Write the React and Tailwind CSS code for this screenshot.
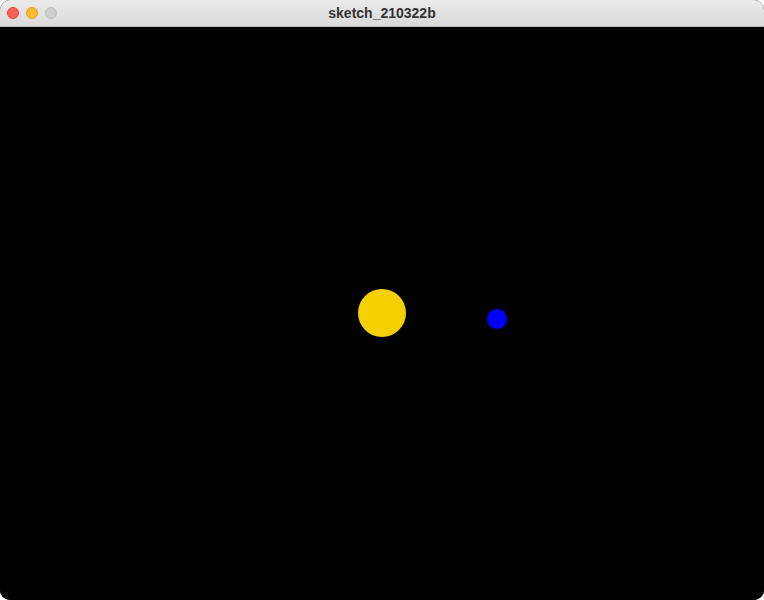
import React from 'react'

export default function App(){
  return (
    <div className="w-[764px] h-[600px] bg-white">
      <div className="w-full h-full flex flex-col rounded-[10px] overflow-hidden bg-black">
        <div className="relative h-[27px] shrink-0 flex items-center justify-center bg-gradient-to-b from-[#ebebeb] to-[#d9d9d9] border-b border-[#b9b9b9]">
          <div className="absolute left-[7px] top-[7px] flex gap-[7px]">
            <span className="w-[12px] h-[12px] rounded-full bg-[#fd5e56] border border-[#e0443e]" />
            <span className="w-[12px] h-[12px] rounded-full bg-[#febc2e] border border-[#dea123]" />
            <span className="w-[12px] h-[12px] rounded-full bg-[#cfcfcf] border border-[#bdbdbd]" />
          </div>
          <span className="text-[14px] font-bold text-[#333333] font-['Liberation_Sans',Arial,sans-serif]">sketch_210322b</span>
        </div>
        <div className="relative flex-1 bg-black">
          <div className="absolute left-[358px] top-[262px] w-[48px] h-[48px] rounded-full bg-[#f5cf00]" />
          <div className="absolute left-[487px] top-[282px] w-[20px] h-[20px] rounded-full bg-[#0000ff]" />
        </div>
      </div>
    </div>
  )
}
